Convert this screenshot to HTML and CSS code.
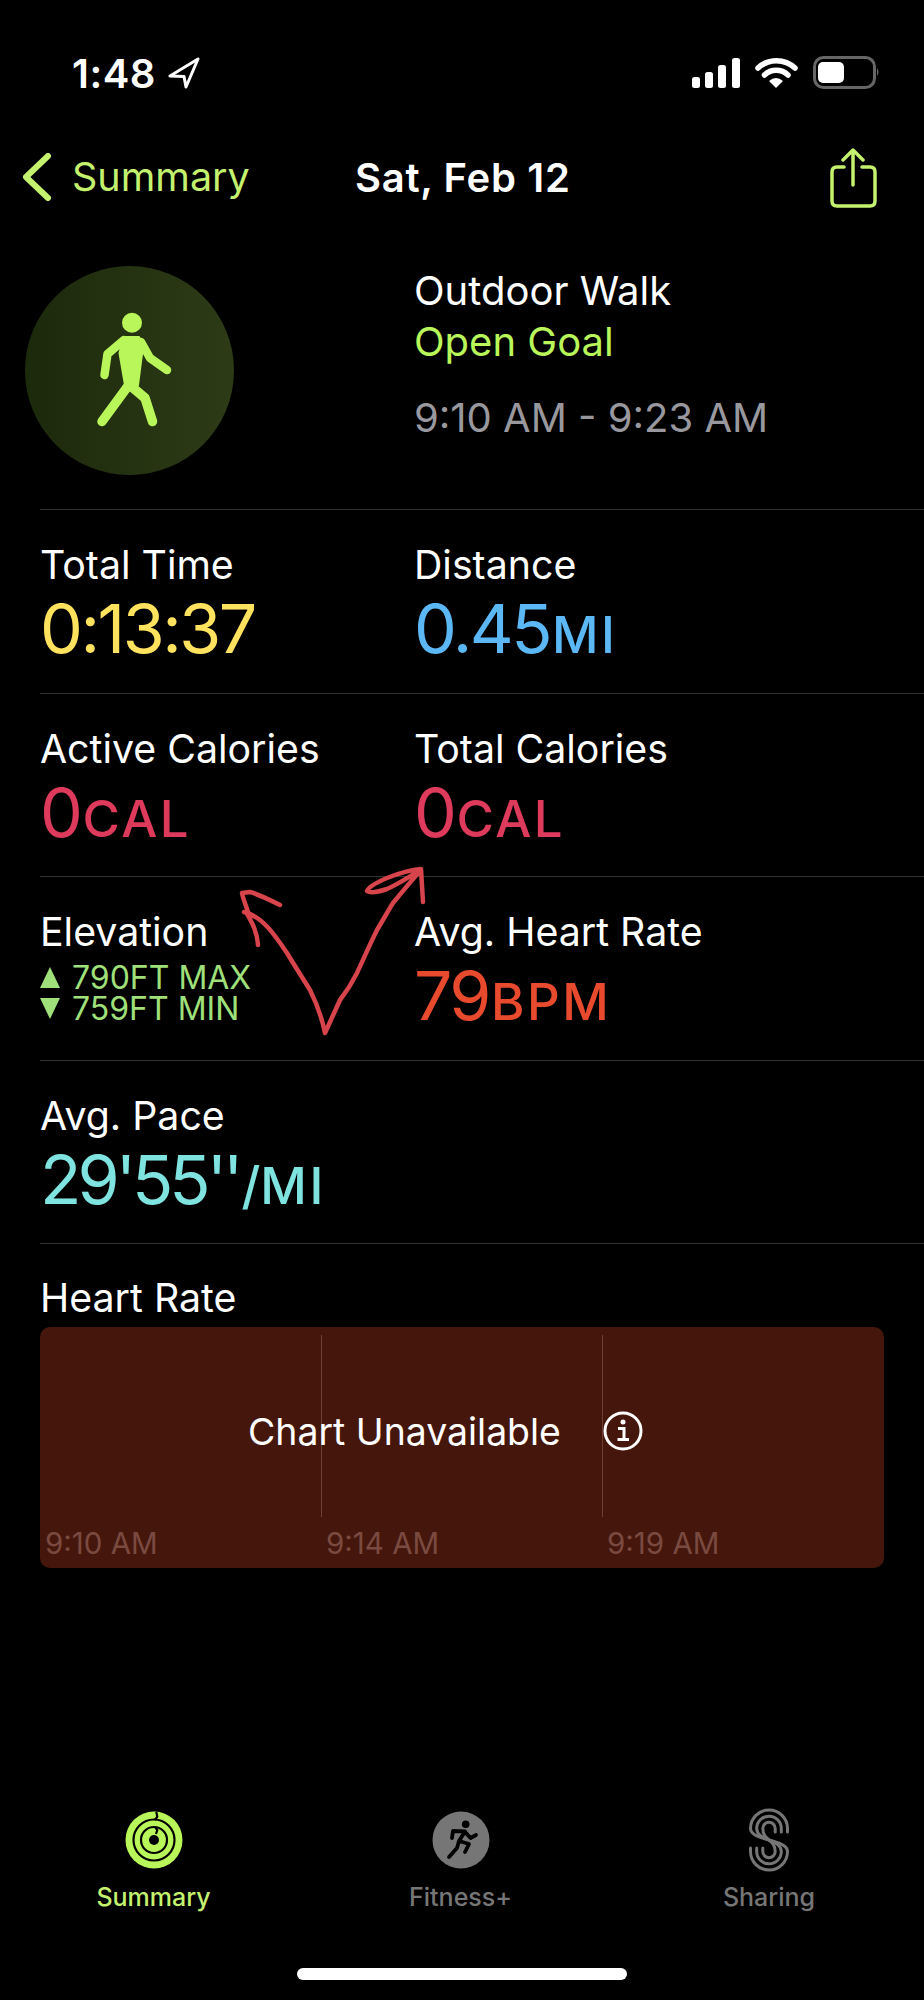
FILE: index.html
```html
<!DOCTYPE html>
<html lang="en">
<head>
    <meta charset="UTF-8">
    <meta name="viewport" content="width=device-width, initial-scale=1.0">
    <title>Outdoor Walk</title>
    <link rel="stylesheet" href="styles.css">
</head>
<body>
    <div class="screen">
        <div class="status-bar">
            <div class="status-time">
                <span>1:48</span>
                <svg class="location-icon" width="32" height="32" viewBox="0 0 32 32"><path d="M30 2 L2 19 L16 19.5 L18 30 Z" fill="none" stroke="#fff" stroke-width="3" stroke-linejoin="round"/></svg>
            </div>
            <svg class="status-icons" width="190" height="34" viewBox="688 56 190 34">
                <rect x="690" y="77" width="8" height="11" rx="2.5" fill="#fff"/>
                <rect x="703" y="72" width="8" height="16" rx="2.5" fill="#fff"/>
                <rect x="716" y="65" width="8" height="23" rx="2.5" fill="#fff"/>
                <rect x="730" y="58" width="8" height="30" rx="2.5" fill="#fff"/>
                <path d="M756 68 A27 27 0 0 1 793 68" fill="none" stroke="#fff" stroke-width="5.500" stroke-linecap="round"/>
                <path d="M762.500 75 A17 17 0 0 1 786 75" fill="none" stroke="#fff" stroke-width="5.500" stroke-linecap="round"/>
                <path d="M767 81 Q774 75 781 81 L774 88 Z" fill="#fff"/>
                <rect x="812.500" y="57.500" width="60" height="30" rx="9" fill="none" stroke="#666" stroke-width="3"/>
                <rect x="816" y="62" width="26" height="21" rx="5" fill="#fff"/>
                <path d="M875 68 Q878 72 875 76 Z" fill="#666"/>
            </svg>
        </div>

        <div class="nav-bar">
            <div class="nav-back">
                <svg width="30" height="48" viewBox="0 0 30 48"><path d="M26 3 L4 24 L26 45" fill="none" stroke="#c4f26f" stroke-width="6" stroke-linecap="round" stroke-linejoin="round"/></svg>
                <span>Summary</span>
            </div>
            <div class="nav-title">Sat, Feb 12</div>
            <svg class="share-icon" width="48" height="60" viewBox="830 146 48 60">
                <path d="M845 165 H838 Q833 165 833 170 V199 Q833 204 838 204 H871 Q876 204 876 199 V170 Q876 165 871 165 H863" fill="none" stroke="#c4f26f" stroke-width="3.500" stroke-linecap="round"/>
                <path d="M854 183 V149 M844 158 L854 148 L864 158" fill="none" stroke="#c4f26f" stroke-width="3.500" stroke-linecap="round" stroke-linejoin="round"/>
            </svg>
        </div>

        <div class="workout-head">
            <div class="workout-badge">
                <svg width="100" height="124" viewBox="80 308 100 124">
                    <circle cx="132" cy="321.700" r="10" fill="#b9f65a"/>
                    <path d="M124 336 H139 L143 345 L138 384 H125 L119.500 352 Z" fill="#b9f65a" stroke="#b9f65a" stroke-width="2" stroke-linejoin="round"/>
                    <path d="M128 385 L102 420.500 M132 386 L145 397 L152.500 420.500" fill="none" stroke="#b9f65a" stroke-width="9.500" stroke-linecap="round" stroke-linejoin="round"/>
                    <path d="M124 339 L107.500 353 L104.500 374 M141 341 L150 357 L167 369" fill="none" stroke="#b9f65a" stroke-width="8.500" stroke-linecap="round" stroke-linejoin="round"/>
                </svg>
            </div>
            <div class="workout-info">
                <div class="workout-name">Outdoor Walk</div>
                <div class="workout-goal">Open Goal</div>
                <div class="workout-time">9:10 AM - 9:23 AM</div>
            </div>
        </div>

        <div class="stat-row">
            <div class="stat">
                <div class="stat-label">Total Time</div>
                <div class="stat-value time">0:13:37</div>
            </div>
            <div class="stat">
                <div class="stat-label">Distance</div>
                <div class="stat-value distance">0.45<span class="unit">MI</span></div>
            </div>
        </div>
        <div class="stat-row">
            <div class="stat">
                <div class="stat-label">Active Calories</div>
                <div class="stat-value calories">0<span class="unit">CAL</span></div>
            </div>
            <div class="stat">
                <div class="stat-label">Total Calories</div>
                <div class="stat-value calories">0<span class="unit">CAL</span></div>
            </div>
        </div>
        <div class="stat-row">
            <div class="stat">
                <div class="stat-label">Elevation</div>
                <div class="elevation">
                    <div class="elevation-line"><span class="tri-up"></span>790FT MAX</div>
                    <div class="elevation-line"><span class="tri-down"></span>759FT MIN</div>
                </div>
            </div>
            <div class="stat">
                <div class="stat-label">Avg. Heart Rate</div>
                <div class="stat-value heart">79<span class="unit">BPM</span></div>
            </div>
        </div>
        <div class="stat-row">
            <div class="stat">
                <div class="stat-label">Avg. Pace</div>
                <div class="stat-value pace">29'55''<span class="unit"><span class="slash">/</span>MI</span></div>
            </div>
        </div>

        <div class="chart-section">
            <div class="stat-label">Heart Rate</div>
            <div class="chart">
                <div class="chart-plot">
                    <div class="chart-col"></div>
                    <div class="chart-col"></div>
                    <div class="chart-col"></div>
                    <div class="chart-message">
                        <span>Chart Unavailable</span>
                        <svg width="40" height="40" viewBox="0 0 40 40">
                            <circle cx="20" cy="20" r="18" fill="none" stroke="#fff" stroke-width="3"/>
                            <circle cx="20" cy="11" r="2.500" fill="#fff"/>
                            <path d="M15 17.500 H21 V28 M14.500 28.500 H26" fill="none" stroke="#fff" stroke-width="3"/>
                        </svg>
                    </div>
                </div>
                <div class="chart-times">
                    <span>9:10 AM</span>
                    <span>9:14 AM</span>
                    <span>9:19 AM</span>
                </div>
            </div>
        </div>

        <div class="tab-bar">
            <div class="tab active">
                <svg width="60" height="64" viewBox="0 0 60 64">
                    <circle cx="30" cy="32" r="28.500" fill="#b9f65a"/>
                    <circle cx="30" cy="32" r="20.500" fill="none" stroke="#000" stroke-width="2.200"/>
                    <circle cx="30" cy="32" r="13" fill="none" stroke="#000" stroke-width="2.200"/>
                    <circle cx="30" cy="32" r="5" fill="#000"/>
                    <path d="M32.300 4 L33.300 8.700 L31 12 M31 19 L33.300 22 L32 26" fill="none" stroke="#000" stroke-width="2.200"/>
                </svg>
                <span>Summary</span>
            </div>
            <div class="tab">
                <svg width="60" height="64" viewBox="0 0 60 64">
                    <circle cx="30" cy="32" r="28.500" fill="#767676"/>
                    <circle cx="34.700" cy="16.300" r="3.800" fill="#000"/>
                    <path d="M21 30 L22 23 L34 23.500 L28 33 L38 36 L34 44 M28 33 L26 40 L18 49 M34 24 L39.500 30 L45 27" fill="none" stroke="#000" stroke-width="3.800" stroke-linecap="round" stroke-linejoin="round"/>
                </svg>
                <span>Fitness+</span>
            </div>
            <div class="tab">
                <svg width="60" height="64" viewBox="0 0 60 64">
                    <path d="M48.500 24 V20.500 A18.500 18.500 0 0 0 11.500 20.500 C11.500 33 48.500 31 48.500 43.500 A18.500 18.500 0 0 1 11.500 43.500 V40" fill="none" stroke="#767676" stroke-width="3" stroke-linecap="round"/>
                    <path d="M42.300 24 V20.500 A12.300 12.300 0 0 0 17.700 20.500 C17.700 33 42.300 31 42.300 43.500 A12.300 12.300 0 0 1 17.700 43.500 V40" fill="none" stroke="#767676" stroke-width="3" stroke-linecap="round"/>
                    <path d="M36.200 24 V20.500 A6.200 6.200 0 0 0 23.800 20.500 C23.800 33 36.200 31 36.200 43.500 A6.200 6.200 0 0 1 23.800 43.500 V40" fill="none" stroke="#767676" stroke-width="3" stroke-linecap="round"/>
                </svg>
                <span>Sharing</span>
            </div>
        </div>
        <div class="home-bar"></div>

        <svg class="scribble" width="924" height="2000" viewBox="0 0 924 2000">
            <path d="M258 945 C257 930 251 921 246 912 M244 912 C262 916 275 935 287 953 C296 968 304 980 310 990 C316 1002 322 1018 325 1033 C330 1022 335 1011 340 1000 C347 991 352 983 357 973 C364 958 370 944 377 930 C383 920 388 911 393 903 C402 892 411 881 421 870 M421 870 C410 876 399 884 387 889 C378 892 370 893 367 891 C369 886 380 881 387 878 C397 874 409 870 421 869 L423 902 M280 905 C268 899 258 894 250 892 L242 893 C243 899 246 905 248 912" fill="none" stroke="#d8444c" stroke-width="4.500" stroke-linecap="round" stroke-linejoin="round"/>
        </svg>
    </div>
</body>
</html>
```

FILE: styles.css
```css
* {
    box-sizing: border-box;
}
body {
    margin: 0;
    background-color: #000;
    color: #fff;
    font-family: Inter, "Liberation Sans", sans-serif;
}
.screen {
    position: relative;
    display: flex;
    flex-direction: column;
    width: 924px;
    height: 2000px;
    overflow: hidden;
}
.status-bar {
    display: flex;
    justify-content: space-between;
    align-items: center;
    height: 130px;
    padding: 16px 44px 0 72px;
}
.status-time {
    display: flex;
    align-items: center;
    gap: 12px;
    font-size: 40px;
    font-weight: 600;
    letter-spacing: 0.5px;
}
.nav-bar {
    display: flex;
    align-items: center;
    height: 96px;
    padding: 0 47px 0 22px;
}
.nav-back {
    display: flex;
    align-items: center;
    gap: 20px;
    width: 333px;
    margin-top: -2px;
    color: #c4f26f;
    font-size: 39.5px;
}
.nav-title {
    flex: 1;
    margin-top: -2px;
    font-size: 40px;
    font-weight: 600;
    letter-spacing: 0.7px;
}
.workout-head {
    display: flex;
    height: 283px;
    padding: 40px 0 0 25px;
}
.workout-badge {
    display: flex;
    align-items: center;
    justify-content: center;
    width: 209px;
    height: 209px;
    border-radius: 50%;
    background: linear-gradient(90deg, #1c2a0c, #2d3b17);
}
.workout-info {
    margin-left: 180px;
    font-size: 40px;
}
.workout-name {
    line-height: 50px;
}
.workout-goal {
    line-height: 52px;
    color: #b9f65a;
}
.workout-time {
    margin-top: 25px;
    line-height: 50px;
    color: #98989e;
}
.stat-row {
    display: grid;
    grid-template-columns: 374px 1fr;
    height: 183.5px;
    margin-left: 40px;
    padding: 31px 0 0;
    border-top: 1px solid #333;
}
.stat-label {
    font-size: 39.3px;
    line-height: 48px;
}
.stat-value {
    font-size: 68px;
    line-height: 78px;
    letter-spacing: -2.5px;
}
.unit {
    margin-left: 2px;
    font-size: 51px;
    font-weight: 500;
    letter-spacing: 2.5px;
}
.slash {
    letter-spacing: 0;
}
.time {
    color: #ffe25d;
}
.distance {
    color: #5bb8f5;
}
.calories {
    color: #dd3a5c;
}
.heart {
    color: #e84a2e;
}
.pace {
    color: #7fe3e0;
    letter-spacing: -4px;
}
.elevation {
    margin-top: 6px;
    color: #9fe07a;
    font-size: 32px;
    line-height: 31px;
}
.elevation-line {
    display: flex;
    align-items: center;
    gap: 12px;
}
.tri-up, .tri-down {
    width: 0;
    height: 0;
    border-left: 10px solid transparent;
    border-right: 10px solid transparent;
}
.tri-up {
    border-bottom: 21px solid #9fe07a;
}
.tri-down {
    border-top: 21px solid #9fe07a;
}
.chart-section {
    height: 324px;
    margin-left: 40px;
    padding: 30px 40px 0 0;
    border-top: 1px solid #333;
}
.chart {
    width: 844px;
    height: 241px;
    margin-top: 5px;
    padding-top: 8px;
    background-color: #45170c;
    border-radius: 10px;
}
.chart-plot {
    position: relative;
    display: grid;
    grid-template-columns: repeat(3, 281px);
    height: 182px;
}
.chart-col + .chart-col {
    border-left: 1px solid #6e3f35;
}
.chart-message {
    position: absolute;
    top: 5px;
    left: 208px;
    display: flex;
    align-items: center;
    gap: 42px;
    height: 182px;
    font-size: 37.4px;
}
.chart-times {
    display: grid;
    grid-template-columns: repeat(3, 281px);
    padding: 8px 0 0 5px;
    color: #7a4a40;
    font-size: 29.5px;
    line-height: 36px;
}
.tab-bar {
    display: grid;
    grid-template-columns: 307px 307px 310px;
    margin-top: auto;
}
.tab {
    display: flex;
    flex-direction: column;
    align-items: center;
    gap: 10px;
    color: #767676;
    font-size: 25px;
    font-weight: 500;
}
.tab.active {
    color: #c4f26f;
}
.home-bar {
    width: 330px;
    height: 12px;
    margin: 56px auto 20px;
    background-color: #fff;
    border-radius: 6px;
}
.scribble {
    position: absolute;
    top: 0;
    left: 0;
    pointer-events: none;
}
```
